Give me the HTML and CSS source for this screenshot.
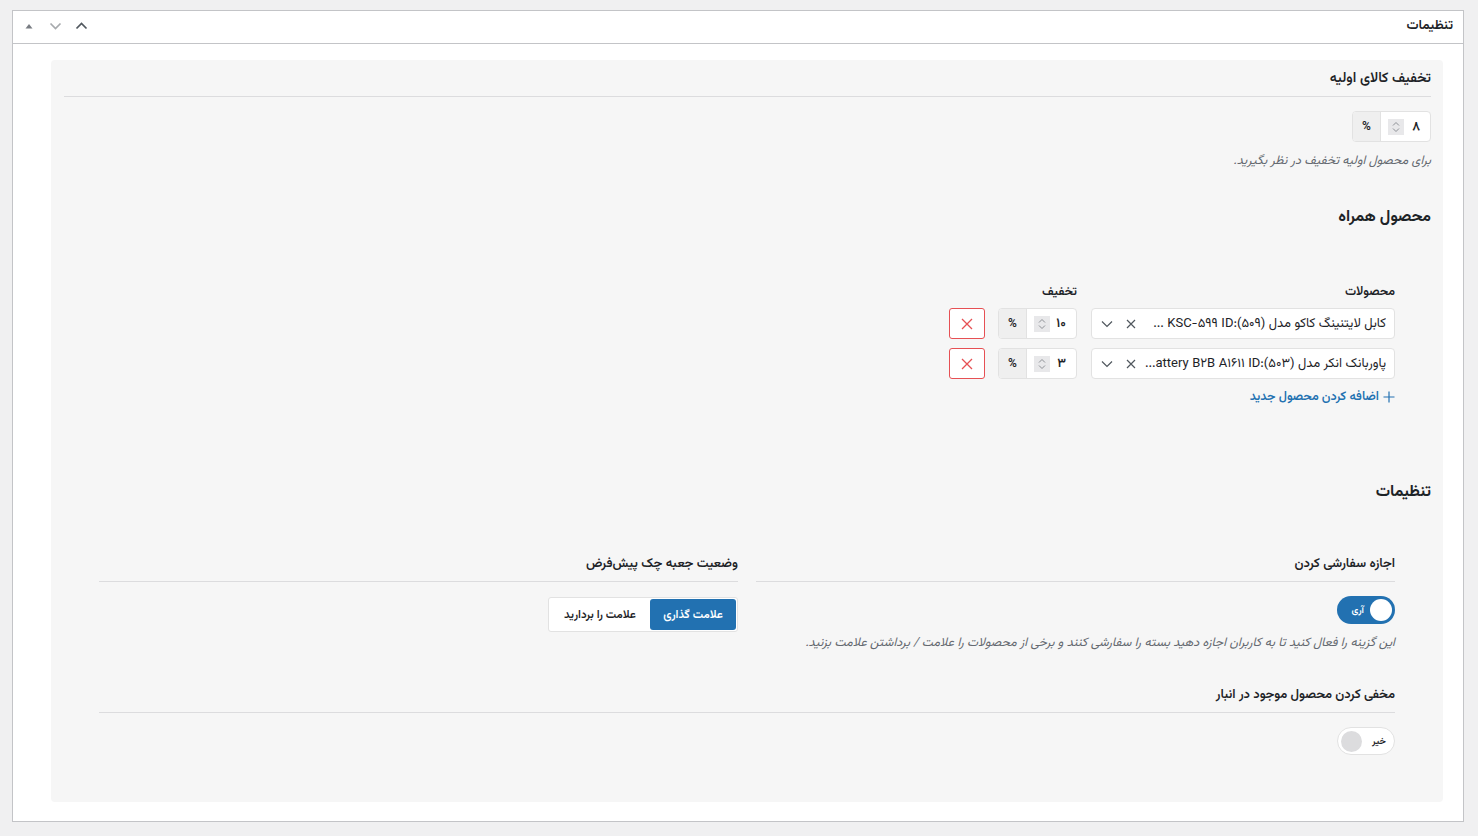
FILE: index.html
```html
<!DOCTYPE html>
<html lang="fa" dir="rtl">
<head>
<meta charset="utf-8">
<title>تنظیمات</title>
<link rel="stylesheet" href="styles.css">
</head>
<body>
<div class="box">
  <div class="box-head">
    <h2 class="box-title">تنظیمات</h2>
    <div class="box-actions">
      <span class="act"><svg width="13" height="12" viewBox="0 0 13 12"><path d="M1.5 8.5 L6.5 3.5 L11.5 8.5" fill="none" stroke="#50575e" stroke-width="1.7"/></svg></span>
      <span class="act"><svg width="13" height="12" viewBox="0 0 13 12"><path d="M1.5 3.5 L6.5 8.5 L11.5 3.5" fill="none" stroke="#a7aaad" stroke-width="1.7"/></svg></span>
      <span class="act"><svg width="10" height="10" viewBox="0 0 10 10"><path d="M1.5 7.5 L5 3 L8.5 7.5 Z" fill="#787c82"/></svg></span>
    </div>
  </div>
  <div class="box-body">
    <div class="panel">
      <div class="sec-head">تخفیف کالای اولیه</div>
      <div class="field">
        <div class="numgroup">
          <div class="num"><span class="val">۸</span><span class="spin"><svg width="8" height="12" viewBox="0 0 8 12"><path d="M1 4.5 L4 1.5 L7 4.5 M1 7.5 L4 10.5 L7 7.5" fill="none" stroke="#8c8f94" stroke-width="1"/></svg></span></div>
          <div class="addon">%</div>
        </div>
        <p class="desc">برای محصول اولیه تخفیف در نظر بگیرید.</p>
      </div>

      <h3 class="big-head">محصول همراه</h3>

      <div class="indent">
        <div class="labels">
          <span class="lbl lbl-prod">محصولات</span>
          <span class="lbl">تخفیف</span>
        </div>
        <div class="prow">
          <div class="select">
            <span class="sel-text">کابل لایتنینگ کاکو مدل (۵۰۹):KSC-۵۹۹ ID ...</span>
            <span class="sel-x"><svg width="10" height="10" viewBox="0 0 10 10"><path d="M1 1 L9 9 M9 1 L1 9" stroke="#50575e" stroke-width="1.2"/></svg></span>
            <span class="sel-arrow"><svg width="12" height="8" viewBox="0 0 12 8"><path d="M1 1.5 L6 6.5 L11 1.5" fill="none" stroke="#50575e" stroke-width="1.2"/></svg></span>
          </div>
          <div class="numgroup small">
            <div class="num"><span class="val">۱۰</span><span class="spin"><svg width="8" height="12" viewBox="0 0 8 12"><path d="M1 4.5 L4 1.5 L7 4.5 M1 7.5 L4 10.5 L7 7.5" fill="none" stroke="#8c8f94" stroke-width="1"/></svg></span></div>
            <div class="addon">%</div>
          </div>
          <button class="remove"><svg width="12" height="12" viewBox="0 0 12 12"><path d="M1 1 L11 11 M11 1 L1 11" stroke="#e65054" stroke-width="1.3"/></svg></button>
        </div>
        <div class="prow">
          <div class="select">
            <span class="sel-text">پاوربانک انکر مدل (۵۰۳):attery B۲B A۱۶۱۱ ID...</span>
            <span class="sel-x"><svg width="10" height="10" viewBox="0 0 10 10"><path d="M1 1 L9 9 M9 1 L1 9" stroke="#50575e" stroke-width="1.2"/></svg></span>
            <span class="sel-arrow"><svg width="12" height="8" viewBox="0 0 12 8"><path d="M1 1.5 L6 6.5 L11 1.5" fill="none" stroke="#50575e" stroke-width="1.2"/></svg></span>
          </div>
          <div class="numgroup small">
            <div class="num"><span class="val">۳</span><span class="spin"><svg width="8" height="12" viewBox="0 0 8 12"><path d="M1 4.5 L4 1.5 L7 4.5 M1 7.5 L4 10.5 L7 7.5" fill="none" stroke="#8c8f94" stroke-width="1"/></svg></span></div>
            <div class="addon">%</div>
          </div>
          <button class="remove"><svg width="12" height="12" viewBox="0 0 12 12"><path d="M1 1 L11 11 M11 1 L1 11" stroke="#e65054" stroke-width="1.3"/></svg></button>
        </div>
        <a class="add-link" href="#"><svg width="12" height="12" viewBox="0 0 12 12"><path d="M6 0.5 V11.5 M0.5 6 H11.5" stroke="#2271b1" stroke-width="1.2"/></svg><span>اضافه کردن محصول جدید</span></a>
      </div>

      <h3 class="big-head settings-head">تنظیمات</h3>

      <div class="indent">
        <div class="cols">
          <div class="col">
            <div class="col-head">اجازه سفارشی کردن</div>
            <div class="toggle on"><span class="knob"></span><span class="tlabel">آری</span></div>
            <p class="desc">این گزینه را فعال کنید تا به کاربران اجازه دهید بسته را سفارشی کنند و برخی از محصولات را علامت / برداشتن علامت بزنید.</p>
          </div>
          <div class="col">
            <div class="col-head">وضعیت جعبه چک پیش‌فرض</div>
            <div class="btngroup">
              <button class="seg active">علامت گذاری</button>
              <button class="seg">علامت را بردارید</button>
            </div>
          </div>
        </div>
        <div class="col-head full">مخفی کردن محصول موجود در انبار</div>
        <div class="toggle off"><span class="tlabel">خیر</span><span class="knob"></span></div>
      </div>
    </div>
  </div>
</div>
</body>
</html>
```
FILE: styles.css
```css
* { box-sizing: border-box; }
html, body { margin: 0; padding: 0; }
body {
  background: #f0f0f1;
  padding: 10px 14px 14px 12px;
  font-family: "Vazirmatn", "Noto Sans Arabic", "DejaVu Sans", "Noto Sans", sans-serif;
  color: #1d2327;
  font-size: 13px;
}
.box {
  background: #fff;
  border: 1px solid #c3c4c7;
  height: 812px;
  display: flex;
  flex-direction: column;
}
.box-head {
  height: 33px;
  border-bottom: 1px solid #c3c4c7;
  display: flex;
  align-items: center;
  justify-content: space-between;
  padding: 0 10px 3px 9px;
}
.box-title {
  margin: 0;
  font-size: 13.5px;
  font-weight: 600;
  color: #1d2327;
}
.box-actions {
  display: flex;
  align-items: center;
  gap: 12px;
}
.act { display: flex; width: 14px; justify-content: center; }
.box-body {
  flex: 1;
  padding: 16px 20px 19px 38px;
  display: flex;
}
.panel {
  flex: 1;
  background: #f6f6f6;
  border-radius: 4px;
  padding: 8px 12px 0 13px;
}
.sec-head {
  font-size: 14px;
  font-weight: 600;
  height: 29px;
  line-height: 22px;
  border-bottom: 1px solid #dcdcde;
}
.field { padding-top: 14px; }
.numgroup {
  display: flex;
  width: 79px;
  height: 31px;
  border: 1px solid #e2e2e2;
  border-radius: 4px;
  background: #fff;
  overflow: hidden;
}
.num {
  flex: 1;
  display: flex;
  align-items: center;
  justify-content: space-between;
  padding: 0 10px 0 7px;
  font-size: 13px;
}
.val { font-weight: 600; }
.spin {
  width: 16px;
  height: 16px;
  background: #e8e8ea;
  display: flex;
  align-items: center;
  justify-content: center;
}
.addon {
  width: 28px;
  background: #efefef;
  border-right: 1px solid #e2e2e2;
  display: flex;
  align-items: center;
  justify-content: center;
  font-size: 12px;
  font-weight: 600;
}
.desc {
  margin: 9px 0 0;
  font-size: 12.5px;
  font-style: italic;
  color: #646970;
}
.big-head {
  margin: 36px 0 0;
  font-size: 16px;
  font-weight: 700;
  line-height: 22px;
}
.indent { padding: 0 36px 0 35px; }
.labels {
  margin-top: 54px;
  display: flex;
  font-size: 12.5px;
  font-weight: 600;
  height: 18px;
  align-items: center;
}
.lbl-prod { width: 318px; }
.prow {
  display: flex;
  align-items: center;
  margin-top: 7px;
}
.prow + .prow { margin-top: 9px; }
.select {
  width: 304px;
  height: 31px;
  border: 1px solid #e2e2e2;
  border-radius: 4px;
  background: #fff;
  display: flex;
  align-items: center;
  padding: 0 8px 0 5px;
  margin-left: 14px;
}
.sel-text {
  flex: 1;
  white-space: nowrap;
  overflow: hidden;
  font-size: 13px;
  direction: rtl;
}
.sel-x { width: 24px; display: flex; justify-content: center; margin-right: 2px; }
.sel-arrow { width: 20px; display: flex; justify-content: center; margin-right: 2px; }
.numgroup.small { margin-left: 13px; }
.remove {
  width: 36px;
  height: 31px;
  border: 1px solid #e65054;
  border-radius: 3px;
  background: #fff;
  display: flex;
  align-items: center;
  justify-content: center;
  padding: 0;
}
.add-link {
  display: inline-flex;
  align-items: center;
  gap: 4px;
  margin-top: 8px;
  color: #2271b1;
  text-decoration: none;
  font-size: 12.5px;
  font-weight: 600;
}
.settings-head { margin-top: 72px; }
.cols {
  display: grid;
  grid-template-columns: 1fr 1fr;
  gap: 18px;
  margin-top: 51px;
}
.col-head {
  font-size: 13px;
  font-weight: 600;
  height: 27px;
  line-height: 18px;
  border-bottom: 1px solid #dcdcde;
}
.col-head.full { margin-top: 33px; }
.toggle {
  margin-top: 14px;
  width: 58px;
  height: 28px;
  border-radius: 14px;
  display: flex;
  align-items: center;
  padding: 0 3px;
  gap: 6px;
}
.toggle.on {
  background: #2271b1;
  color: #fff;
}
.toggle.off {
  background: #fff;
  border: 1px solid #e2e2e2;
  justify-content: space-between;
  padding: 0 8px 0 3px;
}
.knob {
  width: 22px;
  height: 22px;
  border-radius: 50%;
  background: #fff;
}
.toggle.off .knob { background: #dcdcde; width: 21px; height: 21px; }
.tlabel { font-size: 9.5px; font-weight: 600; }
.toggle.off .tlabel { color: #1d2327; }
.btngroup {
  margin-top: 15px;
  width: 190px;
  height: 35px;
  background: #fff;
  border: 1px solid #e2e2e2;
  border-radius: 3px;
  display: flex;
  padding: 1px;
}
.seg {
  border: 0;
  background: transparent;
  font-family: inherit;
  font-size: 11.5px;
  font-weight: 600;
  color: #1d2327;
  padding: 0 6px;
  border-radius: 3px;
  white-space: nowrap;
}
.seg.active {
  background: #2271b1;
  color: #fff;
  width: 86px;
}
.seg:not(.active) { flex: 1; }
```
